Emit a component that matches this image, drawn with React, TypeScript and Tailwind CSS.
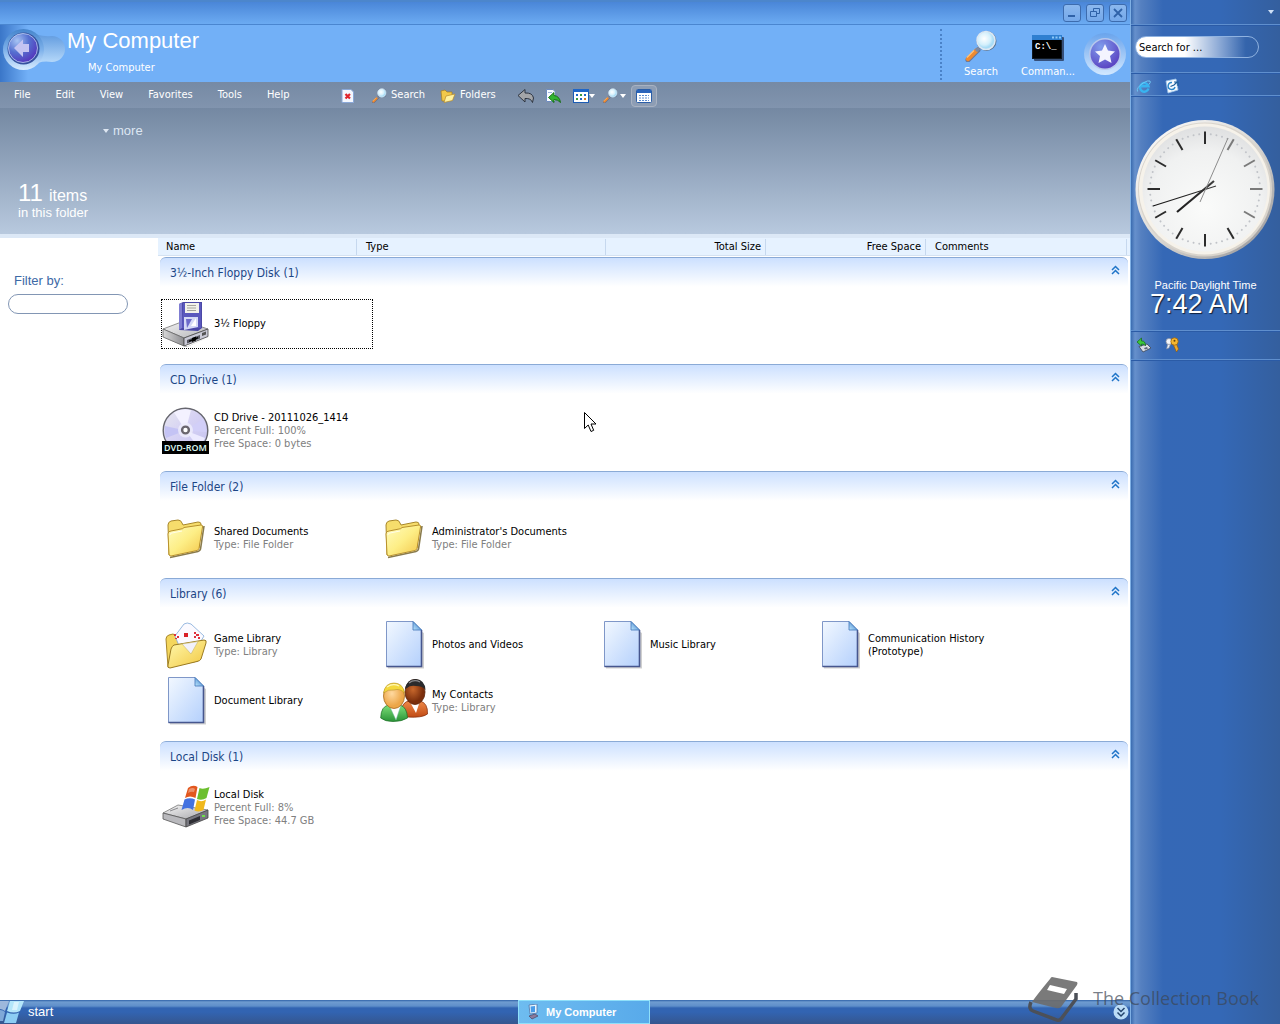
import React from "react";

/* ---------- Drive, folder and library icons (48px) ---------- */

function FloppyIcon() {
  return (
    <svg width="48" height="48" viewBox="0 0 48 48" aria-hidden="true">
      <defs>
        <linearGradient id="fl-top" x1="0" y1="0" x2="1" y2="1">
          <stop offset="0" stopColor="#f4f4f4" />
          <stop offset="1" stopColor="#b4b4b8" />
        </linearGradient>
        <linearGradient id="fl-side" x1="0" y1="0" x2="1" y2="0">
          <stop offset="0" stopColor="#d8d8d8" />
          <stop offset="1" stopColor="#8c8c90" />
        </linearGradient>
      </defs>
      <path d="M3 38 L24 47 L47 37 L26 46.500Z" fill="#666" opacity=".5" />
      <path d="M1 29 L22 21 L46 29 L22 38Z" fill="url(#fl-top)" stroke="#777" strokeWidth=".8" />
      <path d="M1 29 L22 38 V46 L1 37Z" fill="url(#fl-side)" stroke="#666" strokeWidth=".8" />
      <path d="M22 38 L46 29 V36.500 L22 46Z" fill="#c9c9d6" stroke="#444" strokeWidth=".8" />
      <path d="M25 40 L38 35 V38.500 L25 43.500Z" fill="#55555f" />
      <path d="M27 40.500 L36 37 V38.500 L27 42Z" fill="#000" />
      <path d="M30 38 l4 -1.500 v4 l-4 1.500z" fill="#000" />
      <path d="M40 33 l4 -1.500 v3 l-4 1.500z" fill="#555" />
      <path d="M17 4 L21 2 H40 V28 L36 31 L17 30Z" fill="#4b48a6" />
      <path d="M17 4 L20 3 V28 L17 30Z" fill="#7f7dd2" />
      <path d="M21 3 H39 V28 H20Z" fill="#5a58bd" />
      <path d="M23 3 H37 V13 H23Z" fill="#f2f2ea" />
      <path d="M25 5.500h9M25 8h9M25 10.500h9" stroke="#9c9c94" strokeWidth=".9" />
      <path d="M22 17 H36 V27 L22 30Z" fill="#d5daf6" />
      <path d="M24 19 H30 L25 28Z" fill="#6d6bca" />
      <path d="M29 26 L34 18 V26Z" fill="#fff" />
    </svg>
  );
}

function DvdIcon() {
  return (
    <svg width="48" height="48" viewBox="0 0 48 48" aria-hidden="true">
      <defs>
        <linearGradient id="dvd-a" x1="0" y1="0" x2="1" y2="1">
          <stop offset="0" stopColor="#e8e8ee" />
          <stop offset=".45" stopColor="#d6d2f4" />
          <stop offset="1" stopColor="#c4c1ee" />
        </linearGradient>
      </defs>
      <circle cx="23.500" cy="23.500" r="22.300" fill="url(#dvd-a)" stroke="#66666e" strokeWidth="1.400" />
      <path d="M23.500 23.500 L12 5.500 A21 21 0 0 1 29 3.200Z" fill="#f3f1ff" />
      <path d="M23.500 23.500 L3 19 A21 21 0 0 0 4 31Z" fill="#c4c3f4" />
      <path d="M23.500 23.500 L41 12 A21 21 0 0 1 44 25Z" fill="#d2cff8" />
      <path d="M23.500 23.500 L43 31 A21 21 0 0 1 36 40Z" fill="#eceaff" />
      <circle cx="23.500" cy="23" r="7.500" fill="#efeefb" opacity=".8" />
      <circle cx="23.500" cy="23" r="3.400" fill="#fff" stroke="#6a666e" strokeWidth="2.400" />
      <rect x="0" y="34" width="47" height="13" fill="#000" />
      <text x="23.500" y="44" textAnchor="middle" fontFamily="Noto Sans, sans-serif" fontSize="9" fontWeight="600" fill="#d9f4ee">
        DVD-ROM
      </text>
    </svg>
  );
}

function FolderIcon() {
  return (
    <svg width="48" height="48" viewBox="0 0 48 48" aria-hidden="true">
      <defs>
        <linearGradient id="fo-a" x1="0" y1="0" x2="1" y2="1">
          <stop offset="0" stopColor="#fffcc0" />
          <stop offset=".5" stopColor="#fdee86" />
          <stop offset="1" stopColor="#f3c548" />
        </linearGradient>
      </defs>
      <path d="M8 43.500 L36 37.500 Q38 37 38.500 35 L42 12" fill="none" stroke="#6b5a20" strokeWidth="1.600" opacity=".8" />
      <path d="M6 11 Q6 8 9 7 L16 6 Q19 6 20 9 L21 11 L36 8 Q39 8 39 10 L37 34 L7 41Z" fill="#f6dd6c" stroke="#a8872a" />
      <path d="M6 20 Q6 17 9 17 L19 15 Q21 15 22 13.500 L39 11 Q41 11 40.500 13 L37 34.500 Q36.500 36 35 36.500 L9 42 Q7 42 7 40Z" fill="url(#fo-a)" stroke="#b8912c" />
      <path d="M8 21 Q8 19 10 19 L20 17" stroke="#fffde8" fill="none" />
    </svg>
  );
}

function DocumentIcon() {
  return (
    <svg width="48" height="48" viewBox="0 0 48 48" aria-hidden="true">
      <defs>
        <linearGradient id="do-a" x1="0" y1="0" x2="1" y2="1">
          <stop offset="0" stopColor="#f2f8ff" />
          <stop offset="1" stopColor="#b4d0fc" />
        </linearGradient>
        <linearGradient id="do-b" x1="0" y1="1" x2="1" y2="0">
          <stop offset="0" stopColor="#bfe8ff" />
          <stop offset="1" stopColor="#2a6fc0" />
        </linearGradient>
      </defs>
      <path d="M8 46 H42 V11 L44 12 V47.500 H8Z" fill="#777" opacity=".35" />
      <path d="M6.500 .5 H33 L41.500 9 V45.500 H6.500Z" fill="url(#do-a)" stroke="#7f97c8" />
      <path d="M41.500 9 V45.500 H6.500" fill="none" stroke="#46568e" strokeWidth="1.600" />
      <path d="M33 .5 L41.500 9 H33Z" fill="url(#do-b)" stroke="#3f74b8" strokeWidth=".8" />
    </svg>
  );
}

function GameIcon() {
  return (
    <svg width="48" height="48" viewBox="0 0 48 48" aria-hidden="true">
      <defs>
        <linearGradient id="ga-a" x1="0" y1="0" x2="1" y2="1">
          <stop offset="0" stopColor="#fffab0" />
          <stop offset="1" stopColor="#f2c63e" />
        </linearGradient>
      </defs>
      <path d="M4 18 Q4 15 7 14 L11 13 Q13 13 15 17 L43 20 L36 40 L6 46Z" fill="#f4d65c" stroke="#a8872a" />
      <path d="M13 15 L22 3 Q25 1 29 3 L42 15 L33 30 L20 32Z" fill="#fbfaff" stroke="#7fa8d8" strokeWidth=".8" />
      <rect x="22" y="12" width="4" height="4" fill="#d92028" />
      <path d="M12 13h2v2h-2zM15 15h2v2h-2zM13 17h2v1h-2zM32 11h2v2h-2zM34 13h3v2h-3zM32 15h2v2h-2zM36 16h2v2h-2z" fill="#e0303c" />
      <path d="M12 24 L42 19 Q45 19 44 22 L39 38 Q38 40 35 40.500 L8 47 Q5 47 6 44 L9 28 Q10 25 12 24Z" fill="url(#ga-a)" stroke="#9b7b22" />
      <path d="M20 23 L29 33 L36 20.500Z" fill="#f2f1fb" stroke="#c9b866" strokeWidth=".6" />
    </svg>
  );
}

function ContactsIcon() {
  return (
    <svg width="48" height="48" viewBox="0 0 48 48" aria-hidden="true">
      <defs>
        <radialGradient id="co-a" cx=".4" cy=".4">
          <stop offset="0" stopColor="#ffd9a0" />
          <stop offset="1" stopColor="#eca648" />
        </radialGradient>
        <radialGradient id="co-b" cx=".4" cy=".4">
          <stop offset="0" stopColor="#c8682c" />
          <stop offset="1" stopColor="#7a2e0c" />
        </radialGradient>
        <linearGradient id="co-c" x1="0" y1="0" x2="0" y2="1">
          <stop offset="0" stopColor="#7ee07a" />
          <stop offset="1" stopColor="#2a9438" />
        </linearGradient>
        <linearGradient id="co-d" x1="0" y1="0" x2="0" y2="1">
          <stop offset="0" stopColor="#f08a48" />
          <stop offset="1" stopColor="#c04a14" />
        </linearGradient>
      </defs>
      <path d="M21 38 Q21 24 30 24 L40 24 Q48 26 47.500 37 Q42 41 28 40Z" fill="url(#co-d)" stroke="#8a3410" strokeWidth=".8" />
      <path d="M30 25 L36 36 L40 24Z" fill="#fff" />
      <ellipse cx="35" cy="15" rx="10" ry="12.500" fill="url(#co-b)" stroke="#5a2208" strokeWidth=".8" />
      <path d="M25 12 Q27 1.500 36 2 Q45 3 45.500 13 Q43 9 36 9 Q30 8 27 11Z" fill="#2a2a2c" />
      <path d="M29 6 Q34 2 40 5" stroke="#8a8a8e" fill="none" strokeWidth="1.200" />
      <path d="M.7 41 Q1 29 9 28 H20 Q27 30 27.500 41 Q22 44.500 13 44.500 Q5 44.500 .7 41Z" fill="url(#co-c)" stroke="#23762c" strokeWidth=".8" />
      <path d="M9 28 L16 43 L21 28Z" fill="#fff" stroke="#6ab8a0" strokeWidth=".5" />
      <ellipse cx="14" cy="19" rx="10.500" ry="12.500" fill="url(#co-a)" stroke="#a8691c" strokeWidth=".8" />
      <path d="M3.500 16 Q5 6 14 6 Q23 6 24.500 16 Q20 11 14 13 Q8 12 3.500 16Z" fill="#f4d83c" stroke="#b8962a" strokeWidth=".6" />
      <path d="M7 10 Q13 6 19 9" stroke="#fff8b8" fill="none" strokeWidth="1.200" />
    </svg>
  );
}

function DiskIcon() {
  return (
    <svg width="48" height="48" viewBox="0 0 48 48" aria-hidden="true">
      <defs>
        <linearGradient id="di-a" x1="0" y1="0" x2="1" y2="1">
          <stop offset="0" stopColor="#f6f6f6" />
          <stop offset="1" stopColor="#a6a6aa" />
        </linearGradient>
      </defs>
      <path d="M1 29 L16 21 L46 26 L24 35Z" fill="url(#di-a)" stroke="#777" strokeWidth=".8" />
      <path d="M1 29 L24 35 V43 L1 35Z" fill="#b9b9bd" stroke="#555" strokeWidth=".8" />
      <path d="M24 35 L46 26 V34 L24 43Z" fill="#77777f" stroke="#444" strokeWidth=".8" />
      <path d="M27 36.500 L38 32 V36 L27 40.500Z" fill="#2d2d33" />
      <rect x="40" y="31" width="3" height="2" fill="#6ee04a" />
      <path d="M8 27 L16 24" stroke="#8a8a8e" />
      <path d="M26 4 Q31 0 35.500 3 L33.500 14 Q28 11 23 14Z" fill="#e2571e" />
      <path d="M37.500 4 Q41 6 47.500 3 L44.500 14 Q40 17 35 15Z" fill="#6cbf2e" />
      <path d="M22.500 15.500 Q28 13 33 15.500 L31 26 Q26 22 19.500 26Z" fill="#4472e0" />
      <path d="M35 16 Q39.500 18.500 44 15.500 L41.500 26 Q37 28.500 32.500 26.500Z" fill="#f0b81c" />
      <path d="M27 5 Q31 3 33 5 L32 8 Q29 7 26 9Z" fill="#fff" opacity=".35" />
    </svg>
  );
}

/* ---------- Header and toolbar icons ---------- */

function Magnifier({ size, id }: { size: number; id: string }) {
  return (
    <svg width={size} height={size} viewBox="0 0 32 32" aria-hidden="true">
      <defs>
        <radialGradient id={id} cx=".4" cy=".4">
          <stop offset="0" stopColor="#fff" />
          <stop offset=".7" stopColor="#d4f0fc" />
          <stop offset="1" stopColor="#a8dcf6" />
        </radialGradient>
      </defs>
      <path d="M3 30 L13 20" stroke="#5a5060" strokeWidth="5" strokeLinecap="round" opacity=".6" />
      <path d="M3 29 L11 21" stroke="#ee8a30" strokeWidth="4.500" strokeLinecap="round" />
      <path d="M2 27.500 L9 20.500" stroke="#ffc27a" strokeWidth="1.300" />
      <path d="M11 21 L14 18" stroke="#7f8aa0" strokeWidth="3.500" />
      <circle cx="21.500" cy="11" r="10" fill="#56708c" />
      <circle cx="21" cy="10.500" r="9" fill={"url(#" + id + ")"} stroke="#dce8f4" strokeWidth="1.600" />
    </svg>
  );
}

function ConsoleIcon() {
  return (
    <svg width="32" height="28" viewBox="0 0 32 28" aria-hidden="true">
      <rect x="2" y="3" width="30" height="24" rx="1" fill="#36507a" />
      <rect x="0" y="1" width="30" height="24" fill="#101820" />
      <rect x="0" y="1" width="30" height="5" fill="#2f7fd0" />
      <path d="M20 3.500h2M23.500 3.500h2M27 3.500h2" stroke="#8cc8f8" strokeWidth="2" />
      <rect x="1" y="6" width="28" height="18" fill="#000" />
      <text x="3" y="15" fontFamily="Liberation Mono, monospace" fontSize="9" fontWeight="700" fill="#fff">C:\_</text>
    </svg>
  );
}

function BackArt() {
  return (
    <svg width="66" height="48" viewBox="0 0 66 48" aria-hidden="true">
      <defs>
        <linearGradient id="bk-a" x1="0" y1="0" x2="0" y2="1">
          <stop offset="0" stopColor="#4585cc" />
          <stop offset=".5" stopColor="#7cb0ea" />
          <stop offset="1" stopColor="#d8ecff" />
        </linearGradient>
        <linearGradient id="bk-t" x1="0" y1="0" x2="0" y2="1">
          <stop offset="0" stopColor="#5794dc" />
          <stop offset="1" stopColor="#c0e0fd" />
        </linearGradient>
        <radialGradient id="bk-b" cx=".3" cy=".25" r=".9">
          <stop offset="0" stopColor="#a6c4f4" />
          <stop offset=".45" stopColor="#5570d0" />
          <stop offset="1" stopColor="#5428b8" />
        </radialGradient>
      </defs>
      <path d="M28 6 Q38 12 52 11 A13 13 0 0 1 52 37 Q40 35 32 41Z" fill="url(#bk-t)" />
      <circle cx="23.500" cy="24.500" r="20.500" fill="url(#bk-a)" />
      <circle cx="23.500" cy="23.500" r="16" fill="#34509e" />
      <circle cx="23" cy="23" r="14.500" fill="url(#bk-b)" stroke="#cfe0fa" strokeWidth=".7" />
      <path d="M14 23 L23 14.500 V19 H29 V27 H23 V32Z" fill="#c3c4f2" />
    </svg>
  );
}

function StarArt() {
  return (
    <svg width="46" height="46" viewBox="0 0 46 46" aria-hidden="true">
      <defs>
        <linearGradient id="st-a" x1="0" y1="0" x2="0" y2="1">
          <stop offset="0" stopColor="#6aa4ec" />
          <stop offset="1" stopColor="#d2e8ff" />
        </linearGradient>
        <radialGradient id="st-b" cx=".35" cy=".25" r=".9">
          <stop offset="0" stopColor="#7f9cec" />
          <stop offset="1" stopColor="#5536bc" />
        </radialGradient>
      </defs>
      <circle cx="23" cy="23" r="21" fill="url(#st-a)" />
      <circle cx="23" cy="23" r="16" fill="#b8c8ec" />
      <circle cx="23" cy="23" r="14.500" fill="url(#st-b)" />
      <path d="M23 13 L26 19.500 L33 20.500 L28 25 L29.500 32 L23 28.500 L16.500 32 L18 25 L13 20.500 L20 19.500Z" fill="#f4f4ff" />
    </svg>
  );
}

function StopIcon() {
  return (
    <svg width="16" height="16" viewBox="0 0 16 16" aria-hidden="true">
      <path d="M2 1.500 H11 L13.500 4 V14.500 H2Z" fill="#f4f8ff" stroke="#8aa8d8" />
      <path d="M5.500 6 L10 10.500 M10 6 L5.500 10.500" stroke="#e0242c" strokeWidth="2.200" />
    </svg>
  );
}

function OpenFolderIcon() {
  return (
    <svg width="16" height="16" viewBox="0 0 16 16" aria-hidden="true">
      <path d="M1 3 L5 2 L7 4 L12 4 V7 L6 13 L2 13Z" fill="#f2c94a" stroke="#a87c1c" strokeWidth=".7" />
      <path d="M6 8 L15 6 L12.500 12.500 L4 14.500Z" fill="#fff2a0" stroke="#b88a28" strokeWidth=".7" />
    </svg>
  );
}

function UndoIcon() {
  return (
    <svg width="18" height="16" viewBox="0 0 18 16" aria-hidden="true">
      <path d="M1 7.500 L8 1.500 V5 Q15.500 4.500 16.500 10 L15.500 14.500 Q14 10 8 10.500 V14Z" fill="#a3a5a8" stroke="#2d3440" />
    </svg>
  );
}

function MoveIcon() {
  return (
    <svg width="16" height="16" viewBox="0 0 16 16" aria-hidden="true">
      <path d="M1.500 1.500 H8 L10.500 4 V13.500 H1.500Z" fill="#f6faff" stroke="#6f8cc0" />
      <path d="M3 4.500h4" stroke="#9cb4dc" />
      <path d="M3.500 9.500 L9 4.500 V7.500 Q14.500 8 15.500 14.500 Q13 11.500 9 11.500 V14.500Z" fill="#32b432" stroke="#12680f" strokeWidth=".9" />
    </svg>
  );
}

function ViewsIcon() {
  return (
    <svg width="16" height="16" viewBox="0 0 16 16" aria-hidden="true">
      <rect x=".5" y="1.500" width="15" height="13" fill="#fff" stroke="#1c5cb4" />
      <rect x="0" y="1" width="16" height="3" fill="#1f66c8" />
      <path d="M3 6h2v2H3zM11 6h2v2h-2zM7 10h2v2H7z" fill="#1f66c8" />
      <path d="M7 6h2v2H7zM3 10h2v2H3z" fill="#3f9a3f" />
      <path d="M11 10h2v2h-2z" fill="#d07820" />
    </svg>
  );
}

function DetailsIcon() {
  return (
    <svg width="16" height="16" viewBox="0 0 16 16" aria-hidden="true">
      <rect x=".5" y="1.500" width="15" height="13" rx="1" fill="#fff" stroke="#2b5ea8" />
      <rect x="1" y="2" width="14" height="3" fill="#2a64ba" />
      <path d="M3 7.500h10M3 10h10M3 12.500h10" stroke="#5b8cd0" strokeDasharray="2 1" />
    </svg>
  );
}

function Caret() {
  return (
    <svg width="6" height="4" viewBox="0 0 6 4" aria-hidden="true">
      <path d="M0 0h6L3 4z" fill="currentColor" />
    </svg>
  );
}

/* ---------- Sidebar icons ---------- */

function BrowserIcon() {
  return (
    <svg width="16" height="16" viewBox="0 0 16 16" aria-hidden="true">
      <path d="M12.500 10.500 A4.300 4.300 0 1 1 12.500 8.300 H5" fill="none" stroke="#38b4f0" strokeWidth="2.400" />
      <path d="M1.500 13.500 Q0 10 7 5 Q12 2 14 3 Q15 4 13 6.500" fill="none" stroke="#6fc8f4" />
    </svg>
  );
}

function MailIcon() {
  return (
    <svg width="16" height="16" viewBox="0 0 16 16" aria-hidden="true">
      <path d="M2 3 L12 1 L14 12 L4 15Z" fill="#f8fbff" stroke="#9cc4e8" strokeWidth=".8" />
      <path d="M8 4.500 A3.500 3.500 0 1 0 11 9" fill="none" stroke="#2a86c8" strokeWidth="1.400" />
      <path d="M6.500 8.500 L10 7 L13 4 M10 4 H14 V8" fill="none" stroke="#1d5f9c" strokeWidth="1.200" />
    </svg>
  );
}

function EjectIcon() {
  return (
    <svg width="16" height="16" viewBox="0 0 16 16" aria-hidden="true">
      <path d="M3 9.500 L11 7 L15 11 L7 15Z" fill="#d8dce4" stroke="#3a4454" strokeWidth=".8" />
      <path d="M8 11 l3 -1 1 1.500 -3 1z" fill="#5a6678" />
      <path d="M9.500 9 Q9.500 3.500 5.500 4 V1 L1 5 L5.500 9 V7 Q8 6.500 9.500 9Z" fill="#3cc83c" stroke="#126a12" strokeWidth=".7" />
    </svg>
  );
}

function KeysIcon() {
  return (
    <svg width="16" height="16" viewBox="0 0 16 16" aria-hidden="true">
      <path d="M4 6 L2.500 12 L5 11 L7 6" fill="#e8ecf4" stroke="#7c8698" strokeWidth=".6" />
      <circle cx="5" cy="4.500" r="3" fill="#f4f6fa" stroke="#8c94a4" strokeWidth=".8" />
      <path d="M9 7 L12.500 15 L14.500 12 L12 6Z" fill="#f0a828" stroke="#8a5408" strokeWidth=".6" />
      <circle cx="10.500" cy="4.500" r="3.700" fill="#f6b830" stroke="#9a6210" strokeWidth=".8" />
      <circle cx="10.500" cy="3.800" r="1" fill="#6a4408" />
    </svg>
  );
}

function Clock() {
  const ticks = Array.from({ length: 12 }, (_, i) => i * 30);
  const dots = Array.from({ length: 60 }, (_, i) => i * 6).filter((a) => a % 30 !== 0);
  return (
    <svg width="142" height="142" viewBox="0 0 142 142" role="img" aria-label="Analog clock">
      <defs>
        <linearGradient id="ck-rim" x1="0" y1="0" x2="1" y2="1">
          <stop offset="0" stopColor="#ffffff" />
          <stop offset=".5" stopColor="#dcdad6" />
          <stop offset="1" stopColor="#8e8e92" />
        </linearGradient>
        <radialGradient id="ck-face" cx=".5" cy=".65" r=".65">
          <stop offset="0" stopColor="#fafbfa" />
          <stop offset=".7" stopColor="#f0f1f1" />
          <stop offset="1" stopColor="#dfe0e1" />
        </radialGradient>
        <linearGradient id="ck-ink" gradientUnits="userSpaceOnUse" x1="20" y1="110" x2="120" y2="30">
          <stop offset="0" stopColor="#101010" />
          <stop offset=".5" stopColor="#303030" />
          <stop offset="1" stopColor="#8c8c8c" />
        </linearGradient>
      </defs>
      <circle cx="70" cy="71.500" r="69.500" fill="url(#ck-rim)" />
      <circle cx="70" cy="71.500" r="67" fill="#d9d4cc" />
      <circle cx="69.500" cy="71" r="65.500" fill="#f6f2ea" />
      <circle cx="70" cy="71" r="62.500" fill="url(#ck-face)" />
      {dots.map((a) => (
        <circle key={a} cx="70" cy="16" r="1" fill="#c0c3c8" transform={`rotate(${a} 70 71)`} />
      ))}
      {ticks.map((a) => (
        <path
          key={a}
          d="M70 13.500 V26"
          stroke={a >= 30 && a <= 120 ? "#7a7a7a" : "#2c2c2c"}
          strokeWidth="2"
          transform={`rotate(${a} 70 71)`}
        />
      ))}
      <path d="M42 94 L79 63" stroke="url(#ck-ink)" strokeWidth="2.200" />
      <path d="M18 88 L81 68" stroke="url(#ck-ink)" strokeWidth="1.200" />
      <path d="M65 84 L93 20" stroke="#8c8c8c" strokeWidth="1" />
    </svg>
  );
}

/* ---------- Data ---------- */

type Item = { name: string; lines?: string[]; icon: React.ReactNode; focused?: boolean };
type Group = { title: string; items: Item[] };

const groups: Group[] = [
  { title: "3½-Inch Floppy Disk (1)", items: [{ name: "3½ Floppy", icon: <FloppyIcon />, focused: true }] },
  {
    title: "CD Drive (1)",
    items: [{ name: "CD Drive - 20111026_1414", lines: ["Percent Full: 100%", "Free Space: 0 bytes"], icon: <DvdIcon /> }],
  },
  {
    title: "File Folder (2)",
    items: [
      { name: "Shared Documents", lines: ["Type: File Folder"], icon: <FolderIcon /> },
      { name: "Administrator's Documents", lines: ["Type: File Folder"], icon: <FolderIcon /> },
    ],
  },
  {
    title: "Library (6)",
    items: [
      { name: "Game Library", lines: ["Type: Library"], icon: <GameIcon /> },
      { name: "Photos and Videos", icon: <DocumentIcon /> },
      { name: "Music Library", icon: <DocumentIcon /> },
      { name: "Communication History (Prototype)", icon: <DocumentIcon /> },
      { name: "Document Library", icon: <DocumentIcon /> },
      { name: "My Contacts", lines: ["Type: Library"], icon: <ContactsIcon /> },
    ],
  },
  {
    title: "Local Disk (1)",
    items: [{ name: "Local Disk", lines: ["Percent Full: 8%", "Free Space: 44.7 GB"], icon: <DiskIcon /> }],
  },
];

const menus = ["File", "Edit", "View", "Favorites", "Tools", "Help"];

/* ---------- Sections ---------- */

function WindowButton({ label, children }: { label: string; children: React.ReactNode }) {
  return (
    <button
      aria-label={label}
      className="flex size-[18px] items-center justify-center rounded-[3px] border border-[#3d6cae] bg-linear-to-b from-[#8cb8ee] to-[#74a8ea] text-[#2f62a8]"
    >
      <svg width="12" height="12" viewBox="0 0 12 12" fill="none" stroke="currentColor" aria-hidden="true">
        {children}
      </svg>
    </button>
  );
}

function Header() {
  return (
    <header className="bg-[linear-gradient(to_right,#3a76c8,transparent_28px),linear-gradient(to_bottom,#72b0f7,#72b0f7)] text-white">
      <div className="flex h-6 items-center justify-end gap-[5px] border-t-2 border-[#4c86cc] bg-linear-to-b from-[#4a86d8] to-[#6cabf2] pr-[3px]">
        <WindowButton label="Minimize">
          <path d="M2 9h7" strokeWidth="2" />
        </WindowButton>
        <WindowButton label="Restore">
          <path d="M4.500 4V1.500h6v5H8M1.500 4.500h6v5h-6z" />
        </WindowButton>
        <WindowButton label="Close">
          <path d="M2 2l8 8M10 2l-8 8" strokeWidth="1.800" />
        </WindowButton>
      </div>
      <div className="flex h-[58px] border-t border-[#4a86d0]">
        <button aria-label="Back" className="flex w-[66px] items-start">
          <BackArt />
        </button>
        <div className="flex-1 pl-px">
          <h1 className="pt-1 text-[22px] leading-6 font-[Liberation_Sans,sans-serif]">My Computer</h1>
          <p className="pt-[7px] pl-[21px] text-[11px] leading-4">My Computer</p>
        </div>
        <div className="mt-1 mb-[2px] border-l-2 border-dotted border-[#4a82c8]" />
        <button className="flex w-[76px] flex-col items-center justify-between pt-[5px] pb-[2px] pl-[2px] text-[11px] leading-4">
          <Magnifier size={32} id="mg-large" />
          <span>Search</span>
        </button>
        <button className="flex w-[60px] flex-col items-center justify-between pt-[9px] pb-[2px] text-[11px] leading-4">
          <ConsoleIcon />
          <span>Comman...</span>
        </button>
        <button aria-label="Favorites" className="mr-[2px] ml-1 flex items-center">
          <StarArt />
        </button>
      </div>
    </header>
  );
}

function Toolbar() {
  return (
    <div className="flex h-[26px] items-center bg-linear-to-b from-[#768aa4] to-[#8194ae] pt-px text-[11px] text-white">
      <nav className="flex w-[340px] items-center gap-[25px] pl-[14px]">
        {menus.map((m) => (
          <button key={m}>{m}</button>
        ))}
      </nav>
      <button aria-label="Stop" className="w-8">
        <StopIcon />
      </button>
      <button className="flex w-[68px] items-center gap-1">
        <Magnifier size={15} id="mg-tool" />
        Search
      </button>
      <button className="flex w-[77px] items-center gap-1">
        <OpenFolderIcon />
        Folders
      </button>
      <button aria-label="Undo" className="w-7">
        <UndoIcon />
      </button>
      <button aria-label="Move" className="w-7">
        <MoveIcon />
      </button>
      <button aria-label="Views" className="flex w-[30px] items-center">
        <ViewsIcon />
        <Caret />
      </button>
      <button aria-label="Zoom" className="flex w-[28px] items-center gap-[2px]">
        <Magnifier size={15} id="mg-zoom" />
        <Caret />
      </button>
      <button
        aria-label="Details"
        aria-pressed="true"
        className="flex h-[22px] w-[26px] items-center justify-center rounded-sm border border-[#a8b2c2] bg-[#8d9db4]"
      >
        <DetailsIcon />
      </button>
    </div>
  );
}

function GroupSection({ group }: { group: Group }) {
  return (
    <section>
      <h2 className="flex h-[42px] items-start justify-between rounded-t-md border-t border-[#8aaad6] bg-linear-to-b from-[#cce0ff] to-white to-70% pt-[7px] pr-2 pl-[10px] text-[12px] leading-4 text-[#1c4686]">
        {group.title}
        <button aria-label={"Collapse " + group.title} className="text-[#1f74c8]">
          <svg width="9" height="10" viewBox="0 0 9 10" fill="none" stroke="currentColor" strokeWidth="1.500" aria-hidden="true">
            <path d="M1 5l3.500-3.500L8 5M1 9l3.500-3.500L8 9" />
          </svg>
        </button>
      </h2>
      <ul className="grid grid-cols-[repeat(auto-fill,212px)] gap-[6px] pb-[15px] pl-px">
        {group.items.map((it) => (
          <li
            key={it.name}
            className={
              "flex h-[50px] items-center gap-1 border border-dotted " + (it.focused ? "border-black" : "border-transparent")
            }
          >
            {it.icon}
            <div className="w-[130px] pb-px text-[11px] leading-[13px] text-black">
              <p className={it.lines ? "whitespace-nowrap" : ""}>{it.name}</p>
              {it.lines?.map((l) => (
                <p key={l} className="text-[#808080]">
                  {l}
                </p>
              ))}
            </div>
          </li>
        ))}
      </ul>
    </section>
  );
}

function FileList() {
  const col = "border-r border-[#c6d8ee] px-1";
  return (
    <div className="flex-1">
      <div className="flex h-[18px] items-end border-b border-[#d4e2f2] bg-[#e6f2ff] text-[11px] leading-4 text-black">
        <button className={col + " w-[199px] pl-2 text-left"}>Name</button>
        <button className={col + " w-[249px] pl-[9px] text-left"}>Type</button>
        <button className={col + " w-40 text-right"}>Total Size</button>
        <button className={col + " w-40 text-right"}>Free Space</button>
        <button className={col + " mr-[3px] flex-1 pl-[9px] text-left"}>Comments</button>
      </div>
      <div className="pt-px pr-[2px] pl-[2px]">
        {groups.map((g) => (
          <GroupSection key={g.title} group={g} />
        ))}
      </div>
    </div>
  );
}

function Taskbar() {
  return (
    <footer className="flex h-6 items-stretch bg-[linear-gradient(to_bottom,#2f62a8,#6f9cd0_2px,#5f8fca_6px,#3264b2_8px,#3264b2_50%,#35568e)]">
      <button className="flex w-[518px] items-center gap-1 font-[Liberation_Sans,sans-serif] text-[13px] text-white">
        <svg width="24" height="22" viewBox="0 0 24 22" aria-hidden="true">
          <path d="M0 0 H9 L5 10 Q2 8 0 8Z" fill="#9db8dc" />
          <path d="M10 0 H24 L20 10 Q14 13 7 10Z" fill="#b4e6fa" />
          <path d="M0 9 Q3 9 5 11 L3 20 L0 20Z" fill="#7fa8d8" />
          <path d="M7 11.500 Q14 14 19 11.500 L16 22 H4Z" fill="#8ccdf4" />
          <path d="M14 1h5l-2 8h-5z" fill="#fff" opacity=".5" />
        </svg>
        start
      </button>
      <button className="flex w-[132px] items-center gap-[6px] border border-[#8fe0fa] bg-linear-to-r from-[#6ebcf0] to-[#58aaea] pl-[7px] font-[Liberation_Sans,sans-serif] text-[11px] font-bold text-white">
        <svg width="14" height="16" viewBox="0 0 14 16" aria-hidden="true">
          <path d="M3 1 L11 0 V9 L4 10Z" fill="#eaf6ff" stroke="#4d74a8" strokeWidth=".8" />
          <path d="M4.500 2.500 L9 2 V8 L5 8.500Z" fill="#4a9ce8" />
          <path d="M3 12 L9 10 L12 12 L6 15Z" fill="#8a7a9c" stroke="#4c4666" strokeWidth=".7" />
        </svg>
        My Computer
      </button>
      <div className="flex-1" />
      <button aria-label="Show hidden icons" className="mr-[1px] flex items-center">
        <svg width="16" height="16" viewBox="0 0 16 16" aria-hidden="true">
          <circle cx="8" cy="8" r="7.500" fill="#bcdcf6" />
          <path d="M4.500 4 L8 7.500 L11.500 4 M4.500 8.500 L8 12 L11.500 8.500" fill="none" stroke="#24446c" strokeWidth="1.500" />
        </svg>
      </button>
    </footer>
  );
}

function Sidebar() {
  const line = "border-b border-[#5f8fce] shadow-[0_1px_0_#2b5ba6]";
  return (
    <aside className="flex w-[150px] shrink-0 flex-col border-l border-[#7fb0e4] bg-[linear-gradient(to_right,#3a6cb0,#6690cc_4px,#5580c0_10px,#3568b6_32px,#3468b6_60%,#345f9e)] text-white">
      <div className={line + " flex h-[25px] items-center justify-end pr-[6px]"}>
        <button aria-label="Sidebar menu" className="text-[#cfe0f6]">
          <Caret />
        </button>
      </div>
      <div className={line + " h-12 pt-[11px] pl-1"}>
        <input
          aria-label="Search"
          defaultValue="Search for ..."
          className="block h-[22px] w-[124px] rounded-full border border-[#8fb2e0] bg-linear-to-r from-white from-40% to-transparent to-90% px-[3px] text-[11px] text-black outline-none"
        />
      </div>
      <div className={line + " flex h-[23px] items-center gap-3 pt-1 pl-[5px]"}>
        <button aria-label="Browser">
          <BrowserIcon />
        </button>
        <button aria-label="Mail">
          <MailIcon />
        </button>
      </div>
      <div className={line + " flex h-[235px] flex-col items-center pt-[22px] font-[Liberation_Sans,sans-serif]"}>
        <Clock />
        <p className="pt-[18px] text-[11px] leading-[14px]">Pacific Daylight Time</p>
        <p className="mr-3 text-[27px] leading-6 text-shadow-[1px_1px_1px_#10203c]">7:42 AM</p>
      </div>
      <div className={line + " flex h-[29px] items-center gap-3 pl-[5px]"}>
        <button aria-label="Safely remove hardware">
          <EjectIcon />
        </button>
        <button aria-label="Keys">
          <KeysIcon />
        </button>
      </div>
    </aside>
  );
}

export default function App() {
  return (
    <div className="relative flex min-h-screen bg-white font-[DejaVu_Sans_Condensed,Noto_Sans,sans-serif]">
      <div className="flex min-w-0 flex-1 flex-col">
        <Header />
        <Toolbar />
        <div className="flex h-[126px] flex-col justify-between bg-linear-to-b from-[#7488a2] to-[#b8c9de] pt-[15px] pb-[14px] pl-[18px] font-[Liberation_Sans,sans-serif] text-white">
          <button className="ml-[85px] flex items-center gap-1 self-start text-[13px] leading-4 text-[#dde6f2]">
            <Caret />
            more
          </button>
          <div>
            <p className="flex items-baseline gap-[6px] text-[16px] leading-5">
              <span className="text-[24px]">11</span>
              <span>items</span>
            </p>
            <p className="text-[13px] leading-[14px]">in this folder</p>
          </div>
        </div>
        <div className="h-1 bg-[#dce8f6]" />
        <main className="flex flex-1">
          <div className="w-[158px] shrink-0 px-2 pt-[34px] font-[Liberation_Sans,sans-serif]">
            <label htmlFor="filter" className="block pl-[6px] text-[13px] leading-[18px] text-[#3d69a6]">
              Filter by:
            </label>
            <input
              id="filter"
              className="mt-[4px] block h-5 w-[120px] rounded-full border border-[#8296b4] bg-white px-2 text-[11px] outline-none"
            />
          </div>
          <FileList />
        </main>
        <Taskbar />
      </div>
      <Sidebar />

      <svg className="pointer-events-none absolute top-[412px] left-[584px]" width="13" height="21" viewBox="0 0 13 21" aria-hidden="true">
        <path d="M.5 .5 V16.500 L4.200 13 L7 19.500 L9.700 18.300 L7 12 H12Z" fill="#fff" stroke="#000" />
      </svg>

      <div className="pointer-events-none absolute right-[21px] bottom-0 flex h-12 items-center gap-[13px] font-[Open_Sans,sans-serif] text-[18px] text-[#3c4654]/70">
        <svg width="52" height="46" viewBox="0 0 52 46" aria-hidden="true">
          <path d="M24 0 L49 5 Q50 6 49 8 L33 30 Q31 32 28 31 L4 25 Q8 19 22 2 Q23 0 24 0Z" fill="#6c6c6c" opacity=".9" />
          <path d="M22 8 L39 12 L36 17 L19 13Z" fill="#fff" />
          <path d="M3 25 Q0 32 5 34 L29 43 Q31 44 33 42 L48 22 V16" fill="none" stroke="#4c5058" strokeWidth="3.500" />
        </svg>
        <span className="pb-1">The Collection Book</span>
      </div>
    </div>
  );
}
